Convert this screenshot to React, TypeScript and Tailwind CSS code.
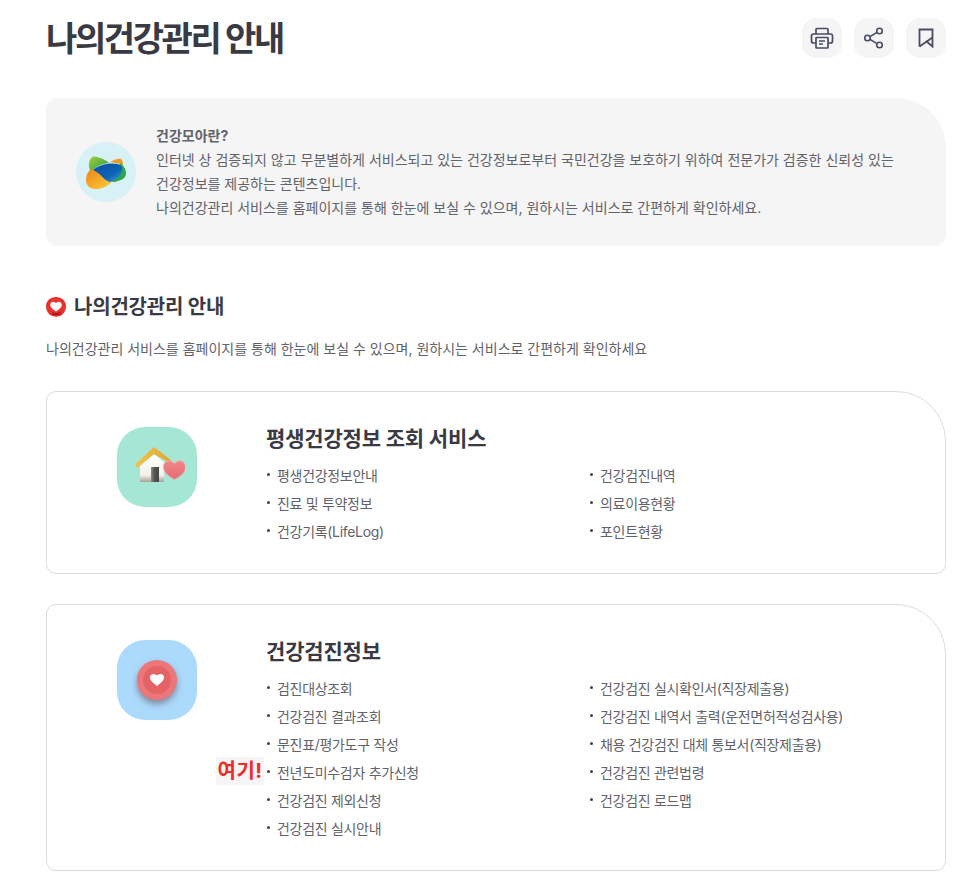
const FONT = 'font-["Inter","Noto_Sans_CJK_KR",sans-serif]';

function IconButton({ children }: { children: React.ReactNode }) {
  return (
    <button className="w-10 h-10 rounded-[14px] bg-[#f5f5f6] flex items-center justify-center text-[#4a4b65]">
      {children}
    </button>
  );
}

function PrintIcon() {
  return (
    <svg width="24" height="24" viewBox="0 0 24 24" fill="none" stroke="currentColor" strokeWidth="1.7" strokeLinejoin="round">
      <path d="M6 8V3.500a1 1 0 0 1 1-1h10a1 1 0 0 1 1 1V8" />
      <path d="M6 17H3.500A2 2 0 0 1 1.500 15v-5A2 2 0 0 1 3.500 8h17a2 2 0 0 1 2 2v5a2 2 0 0 1-2 2H18" />
      <rect x="6" y="11.500" width="12" height="10.500" rx="0.500" />
      <path d="M9 15h6M9 18h4" />
    </svg>
  );
}

function ShareIcon() {
  return (
    <svg width="22" height="22" viewBox="0 0 22 22" fill="none" stroke="currentColor" strokeWidth="1.6">
      <circle cx="16.500" cy="4" r="2.800" />
      <circle cx="4.500" cy="11" r="2.800" />
      <circle cx="16.500" cy="18" r="2.800" />
      <path d="M7 9.600l7-4.200M7 12.400l7 4.200" />
    </svg>
  );
}

function BookmarkIcon() {
  return (
    <svg width="16" height="20" viewBox="0 0 16 20" fill="none" stroke="currentColor" strokeWidth="1.8" strokeLinejoin="miter">
      <path d="M1.500 18.500V1.500h13v17L8 13" />
      <path d="M1.500 18.500L14.500 9.500" />
    </svg>
  );
}

function MoaLogo() {
  return (
    <svg width="40" height="33" viewBox="0 0 40 33">
      <defs>
        <linearGradient id="moaBlue" x1="0" y1="0" x2="1" y2="1">
          <stop offset="0" stopColor="#0b4fa0" />
          <stop offset="0.6" stopColor="#0d62b4" />
          <stop offset="1" stopColor="#3ea0e0" />
        </linearGradient>
        <linearGradient id="moaOrange" x1="0" y1="0" x2="1" y2="1">
          <stop offset="0" stopColor="#ef8418" />
          <stop offset="1" stopColor="#fcd23a" />
        </linearGradient>
        <linearGradient id="moaGreen" x1="0" y1="0" x2="1" y2="1">
          <stop offset="0" stopColor="#a4cf3a" />
          <stop offset="1" stopColor="#1f9a4a" />
        </linearGradient>
      </defs>
      <path d="M3 8C3.500 3 6 0 9 .5c4 .5 9 3 14 6C16 8 9 11 5 16 3.500 13 2.500 11 3 8z" fill="url(#moaGreen)" />
      <path d="M24 6c4-2 8-4 11-3 1.500 1 2 3 2 6-4-2-9-2-13-3z" fill="#f39a22" />
      <path d="M34 7c3 2 6 6 6 10 0 5-4 7-8 8-2 1-4 1-6 1z" fill="#2fa64a" />
      <path d="M0 24c0-4 2-9 5-10.500 3-.5 6 1 9 4 3 4 7 7 13 7.500-4 4-9 7-15 8-4 .5-8-.5-10-3-1-1.500-2-3.500-2-6z" fill="url(#moaOrange)" />
      <path d="M7 14C12 10 19 7.500 25 7.500c5 0 10 .5 11 4 1 4-1 7-4 10-2.500 2-5 4-8 4.500-3-1-5-2.500-7-4.500-3-3-6-6-10-7.500z" fill="url(#moaBlue)" />
    </svg>
  );
}

function HeartBadge() {
  return (
    <svg width="20" height="20" viewBox="0 0 20 20">
      <path d="M10 0C4.500 0 0 3.800 0 9.200c0 4 2.400 7.800 5 9.300 3 1.500 7.500 1.500 10 0 2.700-1.700 5-5.300 5-9.300C20 3.800 15.500 0 10 0z" fill="#e8322f" />
      <path d="M10 14.500l-1-.8C6 11.600 4.200 10 4.200 8c0-1.800 1.400-3.200 3.100-3.200 1.100 0 2.100.6 2.700 1.500.6-.9 1.600-1.500 2.700-1.500 1.700 0 3.100 1.400 3.100 3.200 0 2-1.800 3.600-4.800 5.700z" fill="#fff" />
      <path d="M6 15.200c2.500 1 5.500 1 8.500-.2v2.300c-2.500 1.500-6 1.500-8.500.2z" fill="#b5141b" />
    </svg>
  );
}

function HouseIcon() {
  return (
    <svg width="56" height="40" viewBox="0 0 56 40">
      <defs>
        <linearGradient id="wall" x1="0" y1="0" x2="0" y2="1">
          <stop offset="0" stopColor="#ffffff" />
          <stop offset="0.75" stopColor="#f4f1ea" />
          <stop offset="1" stopColor="#a8a294" />
        </linearGradient>
        <linearGradient id="roof" x1="0" y1="0" x2="1" y2="0">
          <stop offset="0" stopColor="#f4c24a" />
          <stop offset="1" stopColor="#e0a82e" />
        </linearGradient>
        <linearGradient id="door" x1="0" y1="0" x2="1" y2="0">
          <stop offset="0" stopColor="#8a8a8a" />
          <stop offset="0.4" stopColor="#555" />
          <stop offset="1" stopColor="#444" />
        </linearGradient>
        <linearGradient id="heart" x1="0" y1="0" x2="0" y2="1">
          <stop offset="0" stopColor="#f2888c" />
          <stop offset="1" stopColor="#e56a72" />
        </linearGradient>
      </defs>
      <path d="M11 19L25 7l10 8v20H11z" fill="url(#wall)" />
      <path d="M6 17.500L25 0l17 13-1 3L25 7 8 21z" fill="url(#roof)" />
      <rect x="22" y="20" width="8" height="15" fill="url(#door)" />
      <path d="M45.500 32.500c-6.500-3.500-11-7.200-11-12.500 0-3.500 2.500-6.200 5.600-6.200 2.200 0 4.200 1.200 5.400 3 1.200-1.800 3.200-3 5.400-3 3.100 0 5.600 2.700 5.600 6.200 0 5.300-4.500 9-11 12.500z" fill="url(#heart)" stroke="#f6aaa8" strokeWidth="0.800" />
    </svg>
  );
}

function CheckupIcon() {
  return (
    <div className="w-10 h-10 rounded-full bg-[#ec7679] shadow-[0_4px_6px_rgba(90,60,70,0.5)] flex items-center justify-center">
      <div className="w-[28px] h-[28px] rounded-full bg-[#e46366] flex items-center justify-center">
        <svg width="14" height="12" viewBox="0 0 14 12">
          <path d="M7 12C2.500 8.500 0 6.500 0 3.500 0 1.500 1.500 0 3.500 0 5 0 6.300.7 7 1.800 7.700.7 9 0 10.500 0 12.500 0 14 1.500 14 3.500 14 6.500 11.500 8.500 7 12z" fill="#fff" />
        </svg>
      </div>
    </div>
  );
}

function ListItem({ label }: { label: string }) {
  return (
    <li className="h-7 flex items-center text-sm text-[#62626a] tracking-[-0.022em]">
      <span className="w-[3px] h-[3px] rounded-full bg-[#444] mr-[7px] -mt-[3px]" />
      {label}
    </li>
  );
}

function ServiceCard({
  title,
  icon,
  iconBg,
  left,
  right,
}: {
  title: string;
  icon: React.ReactNode;
  iconBg: string;
  left: string[];
  right: string[];
}) {
  return (
    <section className="relative border border-[#dcdcdc] rounded-[10px] rounded-tr-[50px] pt-[35px] pb-[27px] flex">
      <div className="w-[220px] flex justify-center shrink-0">
        <div className={`w-20 h-20 rounded-[28px] flex items-center justify-center ${iconBg}`}>{icon}</div>
      </div>
      <div className="flex-1">
        <h3 className="text-[21px] font-bold text-[#393a44] leading-6 tracking-[-0.008em] mb-[11px] -ml-px">{title}</h3>
        <div className="flex">
          <ul className="w-[323px]">
            {left.map((label) => (
              <ListItem key={label} label={label} />
            ))}
          </ul>
          <ul>
            {right.map((label) => (
              <ListItem key={label} label={label} />
            ))}
          </ul>
        </div>
      </div>
    </section>
  );
}

export default function App() {
  return (
    <div className={`${FONT} bg-white w-[957px] h-[877px] overflow-hidden pl-[46px] pr-[11px] pt-[18px] relative`}>
      <header className="flex items-center justify-between h-10">
        <h1 className="text-[34px] font-bold text-[#393a44] tracking-[-0.07em] leading-10 pt-[2px]">나의건강관리 안내</h1>
        <div className="flex gap-3">
          <IconButton><PrintIcon /></IconButton>
          <IconButton><ShareIcon /></IconButton>
          <IconButton><BookmarkIcon /></IconButton>
        </div>
      </header>

      <div className="mt-10 h-[148px] bg-[#f5f5f5] rounded-[12px] rounded-tr-[50px] flex items-center pl-[30px] pr-[40px]">
        <div className="w-[60px] h-[60px] rounded-full bg-[#d8f1f4] flex items-center justify-center shrink-0">
          <MoaLogo />
        </div>
        <div className="ml-5 text-sm leading-6 text-[#62626a]">
          <p className="font-bold">건강모아란?</p>
          <p>인터넷 상 검증되지 않고 무분별하게 서비스되고 있는 건강정보로부터 국민건강을 보호하기 위하여 전문가가 검증한 신뢰성 있는 건강정보를 제공하는 콘텐츠입니다.</p>
          <p>나의건강관리 서비스를 홈페이지를 통해 한눈에 보실 수 있으며, 원하시는 서비스로 간편하게 확인하세요.</p>
        </div>
      </div>

      <h2 className="mt-[47px] flex items-center gap-2 text-[20px] font-bold text-[#393a44] leading-7 tracking-[-0.01em]">
        <HeartBadge />
        나의건강관리 안내
      </h2>
      <p className="mt-[16px] text-sm leading-6 text-[#62626a]">
        나의건강관리 서비스를 홈페이지를 통해 한눈에 보실 수 있으며, 원하시는 서비스로 간편하게 확인하세요
      </p>

      <div className="mt-[30px] flex flex-col gap-[30px]">
        <ServiceCard
          title="평생건강정보 조회 서비스"
          icon={<HouseIcon />}
          iconBg="bg-[#a5e7d4]"
          left={['평생건강정보안내', '진료 및 투약정보', '건강기록(LifeLog)']}
          right={['건강검진내역', '의료이용현황', '포인트현황']}
        />
        <ServiceCard
          title="건강검진정보"
          icon={<CheckupIcon />}
          iconBg="bg-[#acdafc]"
          left={['검진대상조회', '건강검진 결과조회', '문진표/평가도구 작성', '전년도미수검자 추가신청', '건강검진 제외신청', '건강검진 실시안내']}
          right={['건강검진 실시확인서(직장제출용)', '건강검진 내역서 출력(운전면허적성검사용)', '채용 건강검진 대체 통보서(직장제출용)', '건강검진 관련법령', '건강검진 로드맵']}
        />
      </div>

      <div className="absolute left-[216px] top-[757px] w-12 h-7 bg-[#f5f5f5] flex items-center justify-center text-[20px] font-bold text-[#ee2b2b] whitespace-nowrap tracking-[0.02em] pb-px">
        여기!
      </div>
    </div>
  );
}
